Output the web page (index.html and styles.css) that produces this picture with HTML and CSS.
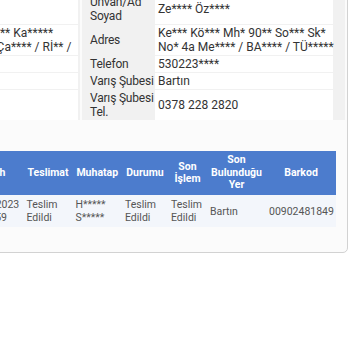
FILE: index.html
```html
<!DOCTYPE html>
<html lang="tr">
<head>
<meta charset="utf-8">
<title>Gönderi Detayı</title>
<link rel="stylesheet" href="styles.css">
</head>
<body>
<div class="card">
  <div class="info">
    <div class="panel panel-left">
      <div class="lbl">Ünvan/Ad<br>Soyad</div><div class="val">Ha**** Ka****</div>
      <div class="lbl">Adres</div><div class="val">Ca**** Mh* Ye**** Sk* No* ** Ka*****<br>Ka**** Ap* Bl* 3 Ke******* Ça**** / Rİ** /</div>
      <div class="lbl">Telefon</div><div class="val">532144****</div>
      <div class="lbl">Çıkış Şubesi</div><div class="val">Rize</div>
      <div class="lbl">Çıkış Şubesi<br>Tel.</div><div class="val">0464 217 1</div>
    </div>
    <div class="panel panel-right">
      <div class="lbl">Ünvan/Ad<br>Soyad</div><div class="val">Ze**** Öz****</div>
      <div class="lbl">Adres</div><div class="val">Ke*** Kö*** Mh* 90** So*** Sk*<br>No* 4a Me**** / BA**** / TÜ*****</div>
      <div class="lbl">Telefon</div><div class="val">530223****</div>
      <div class="lbl">Varış Şubesi</div><div class="val">Bartın</div>
      <div class="lbl">Varış Şubesi<br>Tel.</div><div class="val">0378 228 2820</div>
    </div>
  </div>
  <div class="moves">
    <table class="grid">
      <thead>
        <tr>
          <th class="c-islem">İşlem</th>
          <th class="c-tarih">Tarih</th>
          <th class="c-teslimat">Teslimat</th>
          <th class="c-muhatap">Muhatap</th>
          <th class="c-durum">Durumu</th>
          <th class="c-son">Son İşlem</th>
          <th class="c-yer">Son Bulunduğu Yer</th>
          <th class="c-barkod">Barkod</th>
        </tr>
      </thead>
      <tbody>
        <tr>
          <td>Kargo alıcıya teslim edildi</td>
          <td>06.09.2023 10:45:59</td>
          <td>Teslim Edildi</td>
          <td>H***** S*****</td>
          <td>Teslim Edildi</td>
          <td>Teslim Edildi</td>
          <td>Bartın</td>
          <td>00902481849</td>
        </tr>
      </tbody>
    </table>
  </div>
</div>
</body>
</html>
```

FILE: styles.css
```css
* {
  box-sizing: border-box;
}

html,
body {
  margin: 0;
  padding: 0;
  background: #ffffff;
}

body {
  width: 350px;
  height: 350px;
  overflow: hidden;
  font-family: Roboto, "Liberation Sans", Arial, sans-serif;
  color: #333333;
}

.card {
  width: 578px;
  margin: -18px 0 0 -230px;
  padding: 11px 2px 25px 8px;
  border: 1px solid #d2d2d2;
  border-radius: 5px;
  background: #fbfbfb;
}

.info {
  display: flex;
  gap: 2px;
}

.panel {
  display: grid;
  grid-template-columns: 65px minmax(0, 1fr);
  row-gap: 1px;
  background: #f1f1f1;
  font-size: 12px;
  line-height: 14px;
}

.panel-left {
  width: 301px;
  padding: 0 2px 0 8px;
}

.panel-right {
  flex: 1;
  min-width: 0;
  padding: 0 12px 0 8px;
}

.lbl {
  display: flex;
  align-items: center;
  padding: 1px 0;
  white-space: nowrap;
  letter-spacing: -0.2px;
}

.val {
  display: flex;
  align-items: center;
  padding: 1px 2px 1px 3px;
  background: #ffffff;
  white-space: nowrap;
}

.moves {
  margin: 31px 9px 0 0;
}

.grid {
  width: 100%;
  table-layout: fixed;
  border-collapse: collapse;
  font-size: 10.5px;
}

.grid th {
  padding: 3.25px 3px;
  line-height: 12.5px;
  font-weight: 700;
  color: #ffffff;
  background: #4c7ccd;
  text-align: center;
  vertical-align: middle;
}

.grid td {
  padding: 3px;
  line-height: 13px;
  color: #555555;
  background: #f3f6fb;
  text-align: left;
  vertical-align: middle;
}

.c-islem { width: 184.5px; }
.c-tarih { width: 60px; }
.c-teslimat { width: 49px; }
.c-muhatap { width: 49.5px; }
.c-durum { width: 46px; }
.c-son { width: 39px; }
.c-yer { width: 59px; }
.c-barkod { width: 70px; }
```
